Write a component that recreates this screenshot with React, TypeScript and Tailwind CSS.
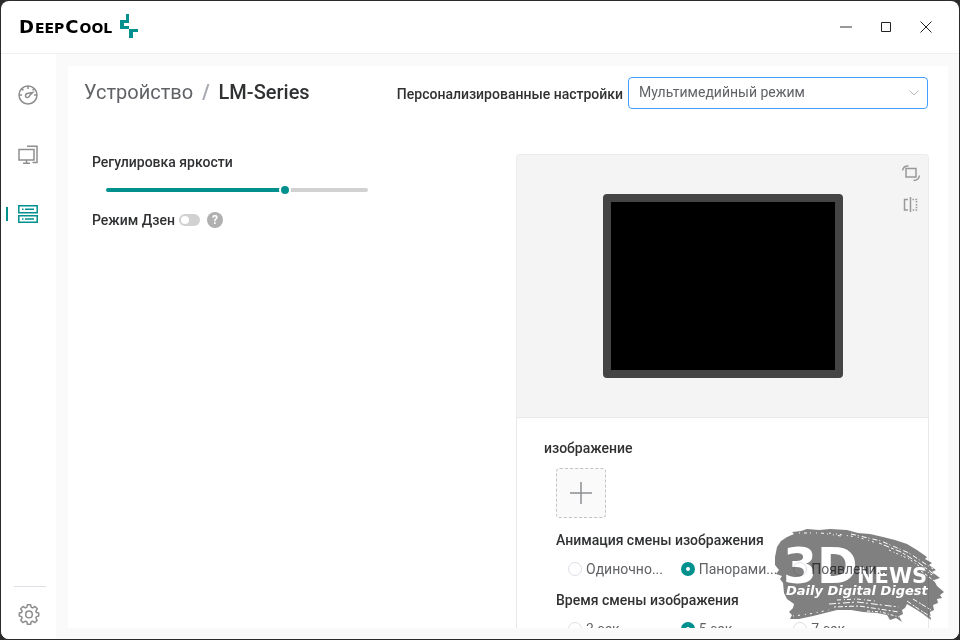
import { useState } from "react";

const labelClass = "text-sm leading-5 font-medium text-[#303133]";

function Logo() {
  return (
    <div className="flex items-center gap-2">
      <span className="flex items-baseline gap-px font-['DejaVu_Sans',sans-serif] text-sm leading-5 font-bold text-black">
        <span className="text-lg leading-5">D</span>
        <span>EEP</span>
        <span className="text-lg leading-5">C</span>
        <span>OOL</span>
      </span>
      <svg width="18" height="24" viewBox="0 0 18 24" fill="#00908d" className="mb-[2px]" aria-hidden>
        <path d="M6 0h3v9H4v3h5v3H0V6h6z" />
        <path d="M9 15h9v3h-5v6h-4z" />
      </svg>
    </div>
  );
}

function TitleBar() {
  return (
    <header className="flex h-[53px] shrink-0 items-center justify-between border-b border-[#f0f0f0] pr-[25px] pl-[18px]">
      <Logo />
      <div className="flex items-center gap-6 text-[#222]">
        <button type="button" aria-label="Свернуть" className="size-4">
          <svg width="16" height="16" viewBox="0 0 16 16" stroke="#999" strokeWidth="2">
            <path d="M2 8h12" />
          </svg>
        </button>
        <button type="button" aria-label="Развернуть" className="size-4">
          <svg width="16" height="16" viewBox="0 0 16 16" fill="none" stroke="currentColor">
            <path d="M3.5 3.5h9v9h-9z" />
          </svg>
        </button>
        <button type="button" aria-label="Закрыть" className="size-4">
          <svg width="16" height="16" viewBox="0 0 16 16" stroke="currentColor">
            <path d="M2.5 2.5l11 11M13.5 2.5l-11 11" />
          </svg>
        </button>
      </div>
    </header>
  );
}

function Sidebar() {
  return (
    <nav className="flex w-[55px] shrink-0 flex-col items-center bg-white pt-[31px] pb-[14px] text-[#8e8e8e]">
      <a href="#monitor" aria-label="Мониторинг" className="mr-[2px]">
        <svg width="20" height="20" viewBox="0 0 20 20" fill="none" stroke="currentColor" strokeWidth="1.5">
          <circle cx="10" cy="10" r="9" />
          <path d="M10 1v3M3.8 3.8l1.6 1.6M16.2 3.8l-1.6 1.6M1 10h3M16 10h3" />
          <path d="M14.6 7.6L10 8.2c-1.6.4-2.7 1.5-2.5 2.9.3 1.4 2 1.8 3.2.9.9-.7 1-1.6 1.7-2.4z" />
        </svg>
      </a>
      <a href="#system" aria-label="Система" className="mt-10 mr-[2px]">
        <svg width="20" height="20" viewBox="0 0 20 20" fill="none" stroke="currentColor" strokeWidth="1.5">
          <path d="M1 4.500h15v10.500H1zM8.500 15v3M5 18.300h7" />
          <path d="M9 1.300h10v16.200h-4.500" />
        </svg>
      </a>
      <a href="#devices" aria-label="Устройства" aria-current="page" className="relative mt-[39px] mr-[2px] text-[#00908d]">
        <span className="absolute top-[3px] -left-3 h-[14px] w-[2px] bg-[#00908d]" />
        <svg width="20" height="20" viewBox="0 0 20 20" fill="none" stroke="currentColor" strokeWidth="1.5">
          <path d="M.8 1.800h18.400v7H.8zM.8 11.800h18.400v6.500H.8z" />
          <path d="M4 5.300h1.500M7 5.300h9M4 15h1.500M7 15h9" />
        </svg>
      </a>
      <div className="mt-auto ml-[2px] h-px w-8 bg-[#dcdfe6]" />
      <a href="#settings" aria-label="Настройки" className="mt-4">
        <svg width="22" height="22" viewBox="0 0 22 22" fill="none" stroke="currentColor" strokeWidth="1.5" strokeLinejoin="round">
          <path d="M9.400 1.700h3.200l.6 2.600 1.500.6 2.300-1.400 2.300 2.300-1.400 2.300.6 1.500 2.200.4v3l-2.200.6-.6 1.500 1.300 2.200-2.200 2.300-2.300-1.400-1.500.6-.6 2.500H9.400l-.6-2.500-1.500-.6L5 19.600l-2.300-2.300 1.400-2.200-.6-1.500-2.200-.6v-3l2.200-.4.6-1.500-1.400-2.300L5 3.500l2.300 1.400 1.500-.6z" />
          <circle cx="11" cy="11.400" r="3.300" />
        </svg>
      </a>
    </nav>
  );
}

function Controls() {
  const [brightness, setBrightness] = useState(69);
  const stop = `${brightness - 1}%`;

  return (
    <section className="flex w-[290px] flex-col">
      <label htmlFor="brightness" className={labelClass}>
        Регулировка яркости
      </label>
      <input
        id="brightness"
        type="range"
        value={brightness}
        onChange={(e) => setBrightness(Number(e.target.value))}
        style={{ backgroundImage: `linear-gradient(to right, #00908d ${stop}, #d1d1d1 ${stop})` }}
        className="mx-[14px] mt-4 h-1 appearance-none rounded-full [&::-webkit-slider-thumb]:size-3 [&::-webkit-slider-thumb]:appearance-none [&::-webkit-slider-thumb]:rounded-full [&::-webkit-slider-thumb]:border-2 [&::-webkit-slider-thumb]:border-white [&::-webkit-slider-thumb]:bg-[#00908d]"
      />
      <div className="mt-[18px] flex items-center">
        <label htmlFor="zen" className={labelClass}>
          Режим Дзен
        </label>
        <input
          id="zen"
          type="checkbox"
          role="switch"
          className="ml-1 h-3 w-[21px] appearance-none rounded-full bg-[#d1d1d1] p-[2px] before:block before:size-2 before:rounded-full before:bg-white checked:bg-[#00908d] checked:before:ml-[9px]"
        />
        <button
          type="button"
          aria-label="Справка"
          className="ml-[7px] size-4 rounded-full bg-[#b0b0b0] text-center text-xs leading-4 font-bold text-white"
        >
          ?
        </button>
      </div>
    </section>
  );
}

function Preview() {
  return (
    <div className="relative flex justify-center rounded-t border border-b-0 border-[#ececec] bg-[#f4f4f4] py-[39px]">
      <div className="h-[184px] w-60 rounded border-8 border-[#444] bg-black" />
      <div className="absolute top-2 right-[7px] flex flex-col gap-3 text-[#999]">
        <button type="button" aria-label="Повернуть">
          <svg width="20" height="20" viewBox="0 0 20 20" fill="none" stroke="currentColor" strokeWidth="1.5">
            <path d="M5 5.500h10v8.500H5z" />
            <path d="M1.500 7.500C2 4.500 4 2.800 7.500 3M18.500 12.500c-.5 3.200-2.700 5-6 5" />
          </svg>
        </button>
        <button type="button" aria-label="Отразить">
          <svg width="20" height="20" viewBox="0 0 20 20" fill="none" stroke="currentColor" strokeWidth="1.5">
            <path d="M7 4.500H3.500V15H7M9.500 2v15" />
            <path d="M11.500 4.500h4V15h-4" strokeDasharray="1.5 1.3" />
          </svg>
        </button>
      </div>
    </div>
  );
}

interface RadioRowProps {
  name: string;
  title: string;
  options: string[];
}

function RadioRow({ name, title, options }: RadioRowProps) {
  return (
    <fieldset className="ml-3">
      <legend className={labelClass}>{title}</legend>
      <div className="mt-[9px] ml-3 grid w-[338px] grid-cols-3">
        {options.map((option, i) => (
          <label key={option} className="flex items-center gap-1 text-sm leading-5 text-[#606266]">
            <input
              type="radio"
              name={name}
              defaultChecked={i === 1}
              className="size-[14px] shrink-0 appearance-none rounded-full border border-[#dcdfe6] bg-white checked:border-[5px] checked:border-[#00908d]"
            />
            {option}
          </label>
        ))}
      </div>
    </fieldset>
  );
}

function DevicePanel() {
  return (
    <section className="mt-[2px] w-[413px] shrink-0">
      <Preview />
      <div className="border border-[#e8e8e8] pt-5 pb-6 pl-[27px]">
        <h2 className={labelClass}>изображение</h2>
        <button
          type="button"
          aria-label="Добавить изображение"
          className="mt-[10px] ml-3 flex size-[50px] items-center justify-center rounded-sm border border-dashed border-[#c4c4c4] bg-[#fafafa]"
        >
          <svg width="24" height="24" viewBox="0 0 24 24" stroke="#8c8f94" strokeWidth="1.5">
            <path d="M12 1v22M1 12h22" />
          </svg>
        </button>
        <div className="mt-3 flex flex-col gap-[11px]">
          <RadioRow
            name="animation"
            title="Анимация смены изображения"
            options={["Одиночно...", "Панорами...", "Появлени..."]}
          />
          <RadioRow
            name="interval"
            title="Время смены изображения"
            options={["3 сек.", "5 сек.", "7 сек."]}
          />
        </div>
      </div>
    </section>
  );
}

function Watermark() {
  return (
    <svg
      width="200"
      height="125"
      viewBox="0 0 200 125"
      className="pointer-events-none absolute right-0 bottom-0 mix-blend-multiply"
      fontFamily="'DejaVu Sans', sans-serif"
      fontWeight="bold"
      fill="#fff"
    >
      <path
        fill="#808080"
        d="M28 23L35 20L33 18L42 17L48 15L60 16L71 15L88 16L99 19L111 20L124 23L136 26L148 30L158 36L168 43L166 45L173 49L170 51L177 56L173 58L181 64L175 66L178 72L185 78L181 81L183 84L178 85L179 89L174 91L175 96L171 98L172 106L164 100L158 96L148 90L146 94L143 96L144 100L140 102L143 108L137 104L131 106L128 101L118 99L104 98L92 96L78 96L66 99L54 102L40 105L31 105L33 101L30 98L34 94L35 90L28 85L25 79L24 69L21 65L23 62L17 60L20 56L16 51L16 43L18 33L22 27Z"
      />
      <g fill="none" stroke="#fff">
        <path d="M40 19l22 0 20 3" strokeDasharray="1 4 3 3 1 5" />
        <path d="M70 19l28 4 20 6" strokeDasharray="2 5 1 3" />
        <path d="M92 20l30 7 28 12 24 16" strokeDasharray="5 2 1 3" />
        <path d="M120 29l22 9 18 11 16 12" strokeDasharray="3 2 6 2" />
        <path d="M130 36l20 9 23 16" strokeDasharray="2 3 1 2" />
        <path d="M162 57l16 12" strokeDasharray="3 2" />
        <path d="M78 86l20-1 18 2" strokeDasharray="4 3 1 2" />
        <path d="M70 90l28-2 42 5" strokeDasharray="7 2 2 3" />
        <path d="M75 93l25-1 40 6" strokeDasharray="2 2 5 2" />
        <path d="M108 97l14 1 18 5" strokeDasharray="3 2 1 2" />
        <path d="M34 102l16-2 20-4" strokeDasharray="1 4 2 5" />
        <path d="M148 87l13 9 11 7M154 85l18 11" strokeDasharray="5 2 2 1" />
      </g>
      <text x="24" y="69" fontSize="49">3D</text>
      <text x="98" y="69" fontSize="21">NEWS</text>
      <text x="27" y="81" fontSize="13" fontStyle="italic">Daily Digital Digest</text>
    </svg>
  );
}

export default function App() {
  return (
    <div className="h-screen bg-[#2b2b2b] p-px font-[Roboto,sans-serif]">
      <div className="relative flex h-full flex-col overflow-hidden rounded-lg bg-white">
        <TitleBar />
        <div className="flex min-h-0 flex-1">
          <Sidebar />
          <main className="min-w-0 flex-1 bg-[#fafafa] pt-3 pr-[11px] pb-[11px] pl-3">
            <div className="h-full overflow-hidden bg-white pt-[11px] pr-[19px] pl-4">
              <div className="flex items-center justify-between pr-px">
                <h1 className="flex gap-[9px] pb-[2px] text-xl leading-7 text-[#606266]">
                  <span>Устройство</span>
                  <span className="font-bold text-[#a8abb2]">/</span>
                  <span className="font-medium text-[#303133]">LM-Series</span>
                </h1>
                <div className="flex items-center gap-[5px]">
                  <label htmlFor="mode" className={`pt-[2px] ${labelClass}`}>
                    Персонализированные настройки
                  </label>
                  <div className="relative">
                    <select
                      id="mode"
                      className="h-8 w-[300px] appearance-none rounded border border-[#409eff] bg-white px-[10px] pb-[2px] text-sm text-[#606266]"
                    >
                      <option>Мультимедийный режим</option>
                    </select>
                    <svg
                      width="10"
                      height="6"
                      viewBox="0 0 10 6"
                      fill="none"
                      stroke="#b4b8bf"
                      className="pointer-events-none absolute top-[13px] right-[9px]"
                    >
                      <path d="M.5.5L5 5l4.500-4.500" />
                    </svg>
                  </div>
                </div>
              </div>
              <div className="mt-[43px] flex justify-between pl-2">
                <Controls />
                <DevicePanel />
              </div>
            </div>
          </main>
        </div>
        <Watermark />
      </div>
    </div>
  );
}
